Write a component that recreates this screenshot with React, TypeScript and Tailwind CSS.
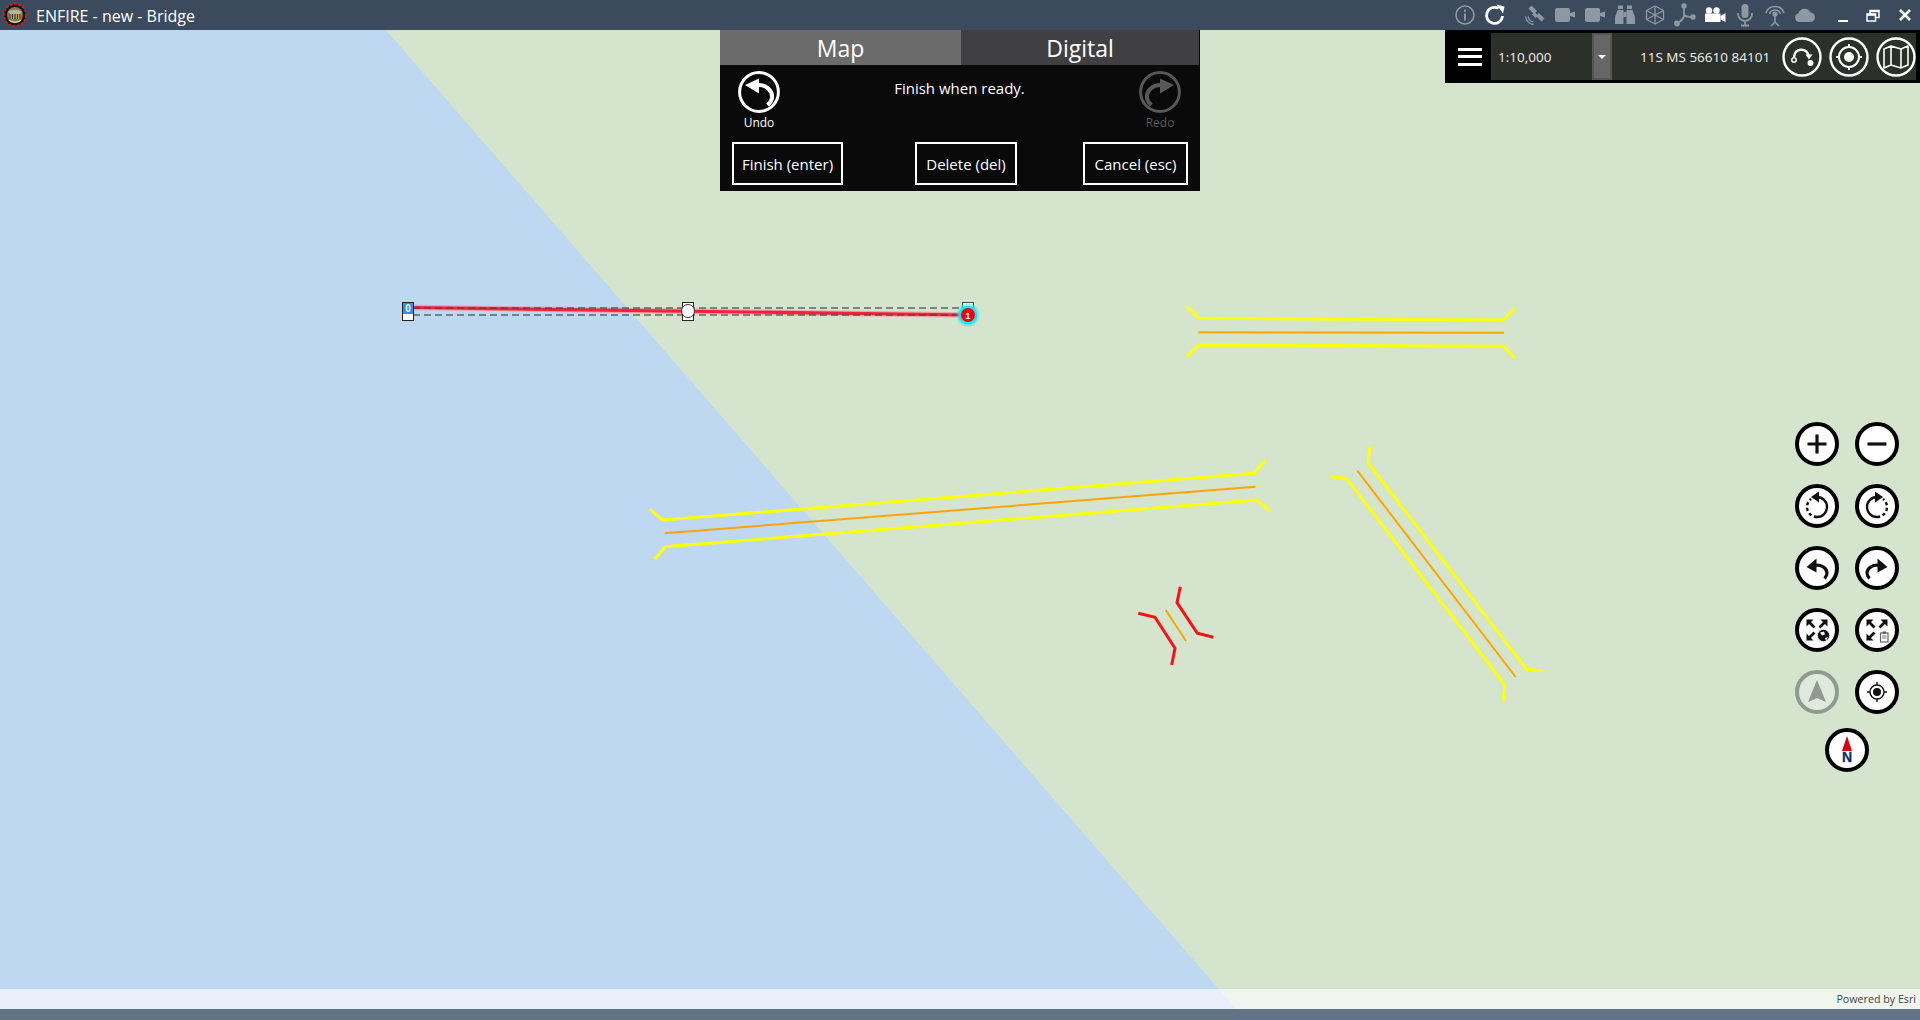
import React from "react";

const LINES: { pts: string; c: string; w: number }[] = [
  { pts: "1186.7,306.7 1199,318.3 1503.3,320 1515,308", c: "#ffff0a", w: 3 },
  { pts: "1186.7,356.7 1199,345 1503.3,346.3 1515,358", c: "#ffff0a", w: 3 },
  { pts: "1198.3,332.3 1504,332.7", c: "#ffa500", w: 2 },
  { pts: "650.2,509.3 662.4,520 1254.4,473.3 1265.4,460", c: "#ffff0a", w: 3 },
  { pts: "654.7,559 665.3,546.7 1256.4,500 1269.5,510", c: "#ffff0a", w: 3 },
  { pts: "664.5,533.3 1255.6,486.7", c: "#ffa500", w: 2 },
  { pts: "1370,446 1368,462.7 1526.7,669.3 1542.7,671", c: "#ffff0a", w: 3 },
  { pts: "1330,476.3 1346.7,478.7 1505,685 1503,701.7", c: "#ffff0a", w: 3 },
  { pts: "1357.3,470.7 1515.7,677", c: "#ffa500", w: 2 },
  { pts: "1138.3,613.3 1155,617.3 1175,648.3 1171.7,665", c: "#ff0f14", w: 3 },
  { pts: "1180.3,586.7 1177,602.7 1197.3,633.3 1213.3,637.3", c: "#ff0f14", w: 3 },
  { pts: "1165.7,610 1186,641", c: "#ffa500", w: 2 },
];

function MapCanvas() {
  return (
    <svg className="absolute inset-0 w-full h-full" viewBox="0 30 1920 979" preserveAspectRatio="none">
      <rect x="0" y="30" width="1920" height="979" fill="#d4e4cd" />
      <polygon points="0,30 386,30 1236,1009 0,1009" fill="#bed8f2" />
      {LINES.map((l, i) => (
        <polyline key={i} points={l.pts} fill="none" stroke={l.c} strokeWidth={l.w} />
      ))}
      <line x1="413" y1="307.5" x2="967" y2="315" stroke="#ff8c9c" strokeWidth="5.5" opacity="0.7" />
      <line x1="413" y1="307.5" x2="967" y2="315" stroke="#ff1f3c" strokeWidth="3.2" />
      <line x1="413" y1="308" x2="967" y2="308" stroke="#3c4a4a" strokeOpacity="0.8" strokeWidth="1.6" strokeDasharray="7 4" />
      <line x1="413" y1="315" x2="967" y2="315" stroke="#3c4a4a" strokeOpacity="0.8" strokeWidth="1.6" strokeDasharray="7 4" />
      <rect x="402.5" y="302.5" width="11" height="18" fill="#fff" stroke="#222" />
      <rect x="403" y="303" width="10" height="11" fill="#2f8ff0" />
      <text x="408" y="312" textAnchor="middle" fontSize="10" fontWeight="700" fontFamily="'Liberation Sans', sans-serif" fill="#fff">0</text>
      <rect x="682.5" y="302.5" width="11" height="18" fill="#fff" stroke="#222" />
      <circle cx="688" cy="311" r="6.5" fill="#fff" stroke="#333" />
      <rect x="962.5" y="302.5" width="11" height="8" fill="#fff" stroke="#444" />
      <circle cx="968" cy="315" r="11.5" fill="#2ee9f0" opacity="0.45" />
      <circle cx="968" cy="315" r="9.5" fill="#12e8f2" opacity="0.95" />
      <circle cx="968" cy="315" r="7" fill="#f0000f" />
      <text x="968" y="318.5" textAnchor="middle" fontSize="9.5" fontWeight="700" fontFamily="'Liberation Sans', sans-serif" fill="#fff">1</text>
    </svg>
  );
}

function Logo() {
  return (
    <svg width="24" height="24" viewBox="0 0 24 24">
      <circle cx="12" cy="12" r="11" fill="#1a1413" stroke="#d3201c" strokeWidth="1.6" strokeDasharray="3 1.2" />
      <circle cx="12" cy="12" r="8" fill="#7d766a" />
      <path d="M5 9 C8 6 15 6 19 9 L17 11 L7 11 Z" fill="#b9b3a4" />
      <rect x="6" y="11" width="12" height="5" fill="#c9a72c" />
      <path d="M7 11v5M9.5 11v5M12 11v5M14.5 11v5M17 11v5" stroke="#222" strokeWidth="1" />
      <path d="M6 17 C9 20 15 20 18 17" stroke="#d8d2c4" strokeWidth="1.5" fill="none" />
    </svg>
  );
}

const G = "#8d98a3";

function Slot({ children, className = "" }: { children: React.ReactNode; className?: string }) {
  return <div className={`w-[30px] h-[30px] flex items-center justify-center ${className}`}>{children}</div>;
}

function TopIcons() {
  return (
    <div className="ml-auto flex items-center">
      <Slot>
        <svg width="22" height="22" viewBox="0 0 22 22" fill="none">
          <circle cx="11" cy="11" r="9" stroke={G} strokeWidth="1.6" />
          <rect x="10" y="9.5" width="2" height="7" fill={G} />
          <rect x="10" y="5.6" width="2" height="2.2" fill={G} />
        </svg>
      </Slot>
      <Slot>
        <svg width="22" height="22" viewBox="0 0 22 22" fill="none">
          <path d="M18.5 12 A8 8 0 1 1 14.5 4.4" stroke="#fff" strokeWidth="2.8" />
          <path d="M12.5 0.5 L20.5 2.5 L19 9.5 Z" fill="#fff" />
        </svg>
      </Slot>
      <Slot className="ml-[10px]">
        <svg width="22" height="22" viewBox="0 0 22 22" fill="none">
          <path d="M7.5 1.5 L13 7 L10 10 L4.5 4.5 Z M15 9 L20.5 14.5 L17.5 17.5 L12 12 Z" fill={G} />
          <path d="M10.5 8 L14 11.5 L11.5 14 L8 10.5 Z" fill={G} />
          <path d="M1.5 12.5 A9 9 0 0 0 9.5 20.5 M4.2 12.5 A6 6 0 0 0 9.5 17.8" stroke={G} strokeWidth="1.3" />
        </svg>
      </Slot>
      {[0, 1].map((i) => (
        <Slot key={i}>
          <svg width="22" height="18" viewBox="0 0 22 18" fill={G}>
            <rect x="1" y="2" width="15" height="14" rx="2" />
            <path d="M16 7 L21 5.5 V11.5 L16 10 Z" />
          </svg>
        </Slot>
      ))}
      <Slot>
        <svg width="22" height="22" viewBox="0 0 22 22" fill={G}>
          <path d="M3.5 6 L9.5 6 V20 H1 V13 Z M12.5 6 L18.5 6 L21 13 V20 H12.5 Z" />
          <rect x="4" y="1.5" width="5" height="3.5" />
          <rect x="13" y="1.5" width="5" height="3.5" />
          <rect x="9.5" y="8" width="3" height="5" />
        </svg>
      </Slot>
      <Slot>
        <svg width="20" height="22" viewBox="0 0 20 22" fill="none" stroke={G} strokeWidth="1.3" strokeLinejoin="round">
          <path d="M10 2 L18.5 6.5 V15.5 L10 20 L1.5 15.5 V6.5 Z" />
          <path d="M1.5 6.5 L10 11 L18.5 6.5 M10 11 V20 M10 2 V11 M1.5 15.5 L10 11 L18.5 15.5" />
        </svg>
      </Slot>
      <Slot>
        <svg width="22" height="24" viewBox="0 0 22 24" fill="none" stroke={G} strokeWidth="1.8">
          <path d="M10 3 V12 C10 16 7 18 3 20.5 M10 12 C12 14 15 14 19 14" />
          <circle cx="10" cy="3" r="1.8" fill={G} />
          <circle cx="3" cy="20.5" r="2" fill={G} />
          <circle cx="19" cy="14" r="1.8" fill={G} />
        </svg>
      </Slot>
      <Slot>
        <svg width="22" height="18" viewBox="0 0 22 18" fill="#fff">
          <circle cx="5" cy="4.5" r="3.2" />
          <circle cx="12.5" cy="4.5" r="3.2" />
          <rect x="1" y="7.5" width="15.5" height="8.5" />
          <path d="M16.5 10 L21.5 7 V16 L16.5 13.5 Z" />
        </svg>
      </Slot>
      <Slot>
        <svg width="18" height="24" viewBox="0 0 18 24" fill="none" stroke={G} strokeWidth="1.8">
          <rect x="5.5" y="1" width="7" height="14" rx="3.5" fill={G} stroke="none" />
          <path d="M2 10 V11 A7 7 0 0 0 16 11 V10 M9 18 V22 M5 22.5 H13" />
        </svg>
      </Slot>
      <Slot>
        <svg width="22" height="24" viewBox="0 0 22 24" fill="none" stroke={G} strokeWidth="1.6">
          <path d="M2 10 A9.5 9.5 0 0 1 20 10 M5.5 11 A5.8 5.8 0 0 1 16.5 11" />
          <circle cx="11" cy="11" r="1.8" fill={G} />
          <path d="M11 13 V19 M11 19 L7 23 M11 19 L15 23" />
        </svg>
      </Slot>
      <Slot>
        <svg width="22" height="16" viewBox="0 0 22 16" fill={G}>
          <path d="M5 15 A4.5 4.5 0 0 1 4.5 6.2 A6.5 6.5 0 0 1 16.5 5.5 A4.8 4.8 0 0 1 17 15 Z" />
        </svg>
      </Slot>
      <Slot className="ml-[8px]">
        <div className="w-[10px] h-[2px] bg-white mt-[11px]" />
      </Slot>
      <Slot>
        <svg width="14" height="13" viewBox="0 0 14 13" fill="none" stroke="#fff" strokeWidth="1.5">
          <rect x="1" y="5" width="8.5" height="7" />
          <path d="M4 5 V1.5 H13 V8.5 H9.5" />
          <path d="M4 2.2 H13" strokeWidth="2" />
          <path d="M1 5.8 H9.5" strokeWidth="2" />
        </svg>
      </Slot>
      <Slot className="ml-[2px]">
        <svg width="14" height="14" viewBox="0 0 14 14" stroke="#fff" strokeWidth="2.6">
          <path d="M2 2 L12 12 M12 2 L2 12" />
        </svg>
      </Slot>
    </div>
  );
}

function CircleIcon({ dim = false }: { dim?: boolean }) {
  const c = dim ? "#585858" : "#fff";
  return (
    <svg width="42" height="42" viewBox="0 0 42 42" fill="none" className={dim ? "-scale-x-100" : ""}>
      <circle cx="21" cy="21" r="19.4" stroke={c} strokeWidth="3" />
      <path d="M19 14 C28 13 35 20 34 27 C33.6 30 32 32 29.5 34" stroke={c} strokeWidth="4" />
      <path d="M21 7.5 V22.5 L7 14 Z" fill={c} />
    </svg>
  );
}

function ToolPanel() {
  const text = "text-white text-[15px] leading-none [font-family:'Open_Sans',sans-serif]";
  return (
    <div className="absolute left-[720px] top-0 w-[480px] flex flex-col bg-[#0a0a0a]">
      <div className="flex h-[35px] pb-0 text-white text-[23px] [font-family:'Open_Sans',sans-serif]">
        <div className="w-[241px] pt-[2px] bg-[#6b6b6b] flex items-center justify-center">Map</div>
        <div className="w-[238px] pt-[2px] bg-[#403f44] flex items-center justify-center">Digital</div>
      </div>
      <div className="h-[126px] flex flex-col">
        <div className="h-[77px] flex justify-between pl-[9px] pr-[10px]">
          <div className="w-[60px] pt-[6px] flex flex-col items-center">
            <CircleIcon />
            <div className="text-[12px] leading-[16px] mt-[2px] text-white [font-family:'Open_Sans',sans-serif]">Undo</div>
          </div>
          <div className={`${text} mt-[16px]`}>Finish when ready.</div>
          <div className="w-[60px] pt-[6px] flex flex-col items-center">
            <CircleIcon dim />
            <div className="text-[12px] leading-[16px] mt-[2px] text-[#585858] [font-family:'Open_Sans',sans-serif]">Redo</div>
          </div>
        </div>
        <div className="flex pl-[12px] pr-[12px]">
          <button className={`${text} w-[111px] h-[43px] pt-[1px] border-2 border-white`}>Finish (enter)</button>
          <button className={`${text} w-[102px] h-[43px] pt-[1px] border-2 border-white ml-[72px]`}>Delete (del)</button>
          <button className={`${text} w-[105px] h-[43px] pt-[1px] border-2 border-white ml-auto`}>Cancel (esc)</button>
        </div>
      </div>
    </div>
  );
}

function Ring({ children }: { children: React.ReactNode }) {
  return (
    <svg width="40" height="40" viewBox="0 0 40 40" fill="none">
      <circle cx="20" cy="20" r="18.5" stroke="#fff" strokeWidth="2.4" />
      {children}
    </svg>
  );
}

function ScalePanel() {
  return (
    <div className="absolute right-0 top-0 w-[475px] h-[53px] bg-black flex py-[3px] pr-[4px]">
      <div className="w-[48px] pl-[4px] flex flex-col items-center justify-center gap-[4.5px]">
        <div className="w-[24px] h-[3px] bg-white" />
        <div className="w-[24px] h-[3px] bg-white" />
        <div className="w-[24px] h-[3px] bg-white" />
      </div>
      <div className="flex-1 bg-[#2d2f2a] flex items-center text-[#eef2f5] [font-family:'Open_Sans',sans-serif] text-[13.5px]">
        <div className="w-[101px] pl-[7px] pt-[2px]">1:10,000</div>
        <div className="w-[20px] h-full bg-[#666] border-2 border-[#555] flex items-center justify-center">
          <div className="w-0 h-0 border-x-[4px] border-x-transparent border-t-[4px] border-t-white" />
        </div>
        <div className="ml-[28px] w-[140px] pt-[2px] whitespace-nowrap">11S MS 56610 84101</div>
        <div className="ml-[2px] flex gap-[7px] items-center">
          <Ring>
            <circle cx="12" cy="23" r="2.2" stroke="#fff" strokeWidth="1.5" />
            <circle cx="28.5" cy="26" r="3" fill="#fff" />
            <path d="M12 20 C13 11 24 10 27 19" stroke="#fff" strokeWidth="2.4" />
            <path d="M23.5 17.5 L30.5 17.5 L27 22.5 Z" fill="#fff" />
          </Ring>
          <Ring>
            <circle cx="20" cy="20" r="10" stroke="#fff" strokeWidth="2" />
            <circle cx="20" cy="20" r="5" fill="#fff" />
            <path d="M20 7 V11 M20 29 V33 M7 20 H11 M29 20 H33" stroke="#fff" strokeWidth="2" />
          </Ring>
          <Ring>
            <path d="M8 12 L15 9 L25 12 L32 9 V28 L25 31 L15 28 L8 31 Z M15 9 V28 M25 12 V31" stroke="#fff" strokeWidth="1.6" strokeLinejoin="round" />
          </Ring>
        </div>
      </div>
    </div>
  );
}

function NavBtn({ children, dim = false }: { children: React.ReactNode; dim?: boolean }) {
  return (
    <div className={`w-[44px] h-[44px] rounded-full border-[4px] flex items-center justify-center ${dim ? "border-[#8f9b90] bg-[#dfe9dc]" : "border-black bg-white"}`}>
      <svg width="36" height="36" viewBox="1 1 36 36" fill="none" className="shrink-0">{children}</svg>
    </div>
  );
}

const arrows = (
  <g>
    <path d="M10 10 L16.5 16.5 M28 10 L21.5 16.5 M10 28 L16.5 21.5" stroke="#111" strokeWidth="2.8" />
    <path d="M8.5 8.5 H15.5 L8.5 15.5 Z M29.5 8.5 V15.5 L22.5 8.5 Z M8.5 29.5 V22.5 L15.5 29.5 Z" fill="#111" />
  </g>
);

const rotateIcon = (
  <g>
    <path d="M19 10 A10 10 0 0 1 19 30" stroke="#111" strokeWidth="2.4" />
    <path d="M19 30 A10 10 0 0 1 9 20 A10 10 0 0 1 13 12" stroke="#111" strokeWidth="2.4" strokeDasharray="3.2 2.6" />
    <path d="M21 4.5 V15.5 L13 10 Z" fill="#111" />
  </g>
);

const undoIcon = (
  <g>
    <path d="M16 16.5 C23 15 29 19 29 24 C29 26 28 28 26.5 29.5" stroke="#111" strokeWidth="3.2" />
    <path d="M18.5 9.5 V23.5 L8.5 18 Z" fill="#111" />
  </g>
);

function NavPanel() {
  return (
    <div className="absolute left-[1795px] top-[392px] flex flex-col gap-[18px] w-[104px]">
      <div className="flex gap-[16px]">
        <NavBtn><path d="M19 9.5 V28.5 M9.5 19 H28.5" stroke="#111" strokeWidth="3.2" /></NavBtn>
        <NavBtn><path d="M9.5 19 H28.5" stroke="#111" strokeWidth="3.2" /></NavBtn>
      </div>
      <div className="flex gap-[16px]">
        <NavBtn>{rotateIcon}</NavBtn>
        <NavBtn><g transform="matrix(-1 0 0 1 38 0)">{rotateIcon}</g></NavBtn>
      </div>
      <div className="flex gap-[16px]">
        <NavBtn>{undoIcon}</NavBtn>
        <NavBtn><g transform="matrix(-1 0 0 1 38 0)">{undoIcon}</g></NavBtn>
      </div>
      <div className="flex gap-[16px]">
        <NavBtn>
          {arrows}
          <circle cx="25.5" cy="24.5" r="6.2" fill="#111" stroke="#fff" strokeWidth="1" />
          <path d="M22 21.5 L26 20.5 L27 23.5 L24 24.5 Z M27 27 L30 26 L28 30 Z" fill="#fff" />
        </NavBtn>
        <NavBtn>
          {arrows}
          <rect x="22.5" y="22" width="7.5" height="9" fill="#fff" stroke="#666" strokeWidth="1.2" />
          <rect x="24.5" y="20.5" width="3.5" height="2.5" fill="#666" />
          <path d="M24 25 H28.5 M24 27 H28.5" stroke="#666" strokeWidth="0.9" />
        </NavBtn>
      </div>
      <div className="flex gap-[16px]">
        <NavBtn dim><path d="M19 7 L28 29 L19 25 L10 29 Z" fill="#8f9b90" /></NavBtn>
        <NavBtn>
          <circle cx="19" cy="19" r="7" stroke="#111" strokeWidth="1.4" />
          <circle cx="19" cy="19" r="4" fill="#111" />
          <path d="M19 9 V12 M19 26 V29 M9 19 H12 M26 19 H29" stroke="#111" strokeWidth="1.4" />
        </NavBtn>
      </div>
      <div className="flex justify-center mt-[-4px]">
        <NavBtn>
          <path d="M19 5 L24 20 H14 Z" fill="#d6000f" />
          <text x="19" y="31" textAnchor="middle" fontSize="14" fontWeight="700" fontFamily="'Liberation Sans', sans-serif" fill="#0c2f6b" stroke="#0c2f6b" strokeWidth="0.3">N</text>
        </NavBtn>
      </div>
    </div>
  );
}

export default function App() {
  return (
    <div className="w-[1920px] h-[1020px] flex flex-col overflow-hidden bg-[#637386]">
      <header className="h-[30px] bg-[#3b4a5c] flex items-center">
        <div className="ml-[3px] w-[24px] h-[24px]"><Logo /></div>
        <span className="ml-[9px] pt-[2px] text-white text-[16px] [font-family:'Open_Sans',sans-serif]">ENFIRE - new - Bridge</span>
        <TopIcons />
      </header>
      <main className="relative flex-1">
        <MapCanvas />
        <ToolPanel />
        <ScalePanel />
        <NavPanel />
        <div className="absolute bottom-0 left-0 right-0 h-[20px] bg-white/65 flex items-center justify-end pr-[4px] text-[10.7px] text-[#444] [font-family:'Open_Sans',sans-serif]">Powered by Esri</div>
      </main>
      <div className="h-[11px] bg-[#637386]" />
    </div>
  );
}
